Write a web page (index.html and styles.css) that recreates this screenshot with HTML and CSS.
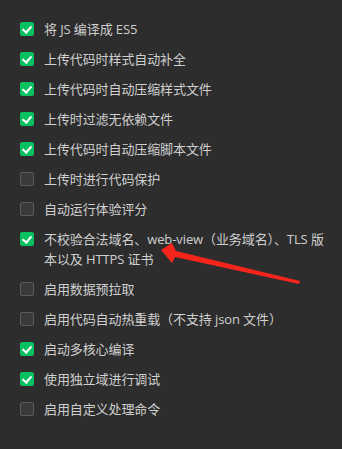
FILE: index.html
```html
<!DOCTYPE html>
<html lang="zh-CN">
<head>
    <meta charset="UTF-8">
    <meta name="viewport" content="width=device-width, initial-scale=1.0">
    <title>项目设置</title>
    <link rel="stylesheet" href="styles.css">
</head>
<body>

    <div class="panel">
        <!-- 本地设置选项 -->
        <ul class="options">
            <li class="option"><span class="box checked"></span><span class="label">将 JS 编译成 ES5</span></li>
            <li class="option"><span class="box checked"></span><span class="label">上传代码时样式自动补全</span></li>
            <li class="option"><span class="box checked"></span><span class="label">上传代码时自动压缩样式文件</span></li>
            <li class="option"><span class="box checked"></span><span class="label">上传时过滤无依赖文件</span></li>
            <li class="option"><span class="box checked"></span><span class="label">上传代码时自动压缩脚本文件</span></li>
            <li class="option"><span class="box"></span><span class="label">上传时进行代码保护</span></li>
            <li class="option"><span class="box"></span><span class="label">自动运行体验评分</span></li>
            <li class="option"><span class="box checked"></span><span class="label">不校验合法域名、web-view（业务域名）、TLS 版本以及 HTTPS 证书</span></li>
            <li class="option"><span class="box"></span><span class="label">启用数据预拉取</span></li>
            <li class="option"><span class="box"></span><span class="label">启用代码自动热重载（不支持 json 文件）</span></li>
            <li class="option"><span class="box checked"></span><span class="label">启动多核心编译</span></li>
            <li class="option"><span class="box checked"></span><span class="label">使用独立域进行调试</span></li>
            <li class="option"><span class="box"></span><span class="label">启用自定义处理命令</span></li>
        </ul>

        <!-- 红色标注箭头 -->
        <svg class="arrow" width="342" height="449" viewBox="0 0 342 449">
            <polygon points="161,250 172,243 176,251 300,281 299,284 175,257 172,263" fill="#f5251c"/>
        </svg>
    </div>

</body>
</html>
```

FILE: styles.css
```css
body {
    margin: 0;
    padding: 0;
    background-color: #2d2d2d;
    font-family: "Open Sans", "Noto Sans CJK SC", sans-serif;
    font-size: 13px;
    color: #cfcfcf;
}

.panel {
    position: relative;
    width: 342px;
    height: 449px;
}

.options {
    list-style: none;
    margin: 0;
    padding: 14px 10px 0 20px;
}

.option {
    display: flex;
    align-items: flex-start;
    padding: 5px 0;
    line-height: 20px;
}

.box {
    flex: none;
    width: 12px;
    height: 12px;
    margin-top: 3px;
    margin-right: 10px;
    border: 1px solid #5c5c5c;
    border-radius: 2px;
    background-color: #3a3a3a;
    position: relative;
}

.box.checked {
    background-color: #07c160;
    border-color: #07c160;
}

.box.checked::after {
    content: "";
    position: absolute;
    left: 3px;
    top: 1px;
    width: 4px;
    height: 7px;
    border-right: 2px solid #fff;
    border-bottom: 2px solid #fff;
    transform: rotate(40deg);
}

.label {
    letter-spacing: -0.1px;
}

.arrow {
    position: absolute;
    left: 0;
    top: 0;
    pointer-events: none;
}
```
